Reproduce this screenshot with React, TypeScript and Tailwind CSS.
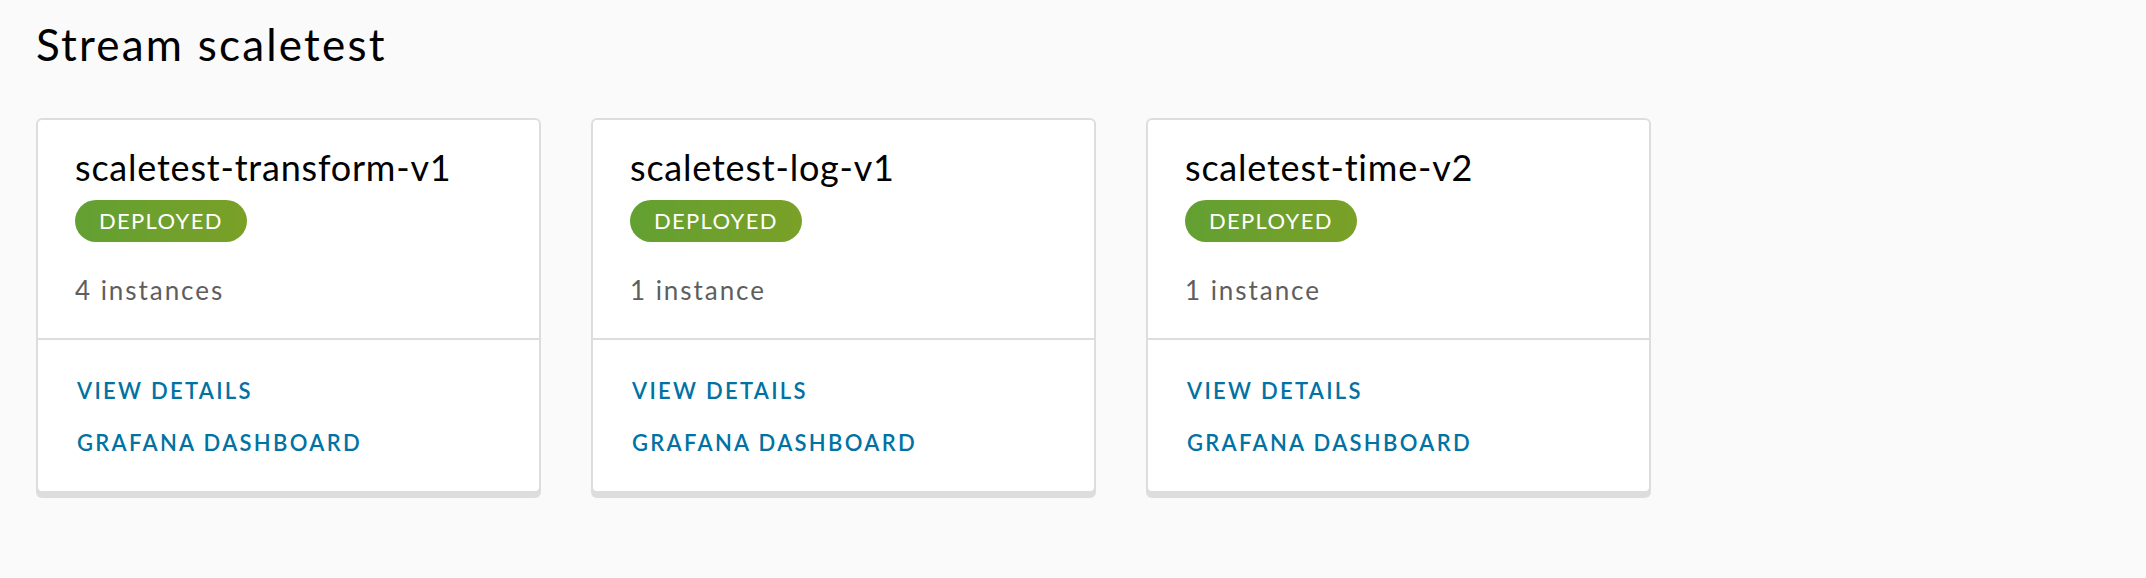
import React from "react";

const streams = [
  { name: "scaletest-transform-v1", instances: "4 instances" },
  { name: "scaletest-log-v1", instances: "1 instance" },
  { name: "scaletest-time-v2", instances: "1 instance" },
];

function Card({ name, instances }: { name: string; instances: string }) {
  return (
    <div className="w-[505px] rounded-[6px] border-2 border-[#dddddd] bg-white shadow-[0_5px_0_0_#dddddd] flex flex-col">
      <div className="px-[37px] pt-[25px] pb-[30px] flex flex-col">
        <div className="text-[36px] leading-[44px] tracking-[0.022em] text-black">{name}</div>
        <div className="mt-[11px] flex">
          <span className="h-[42px] px-[24px] rounded-full bg-gradient-to-r from-[#62a032] to-[#7aa027] text-white text-[22px] leading-[42px] tracking-[0.06em] flex items-center">
            DEPLOYED
          </span>
        </div>
        <div className="mt-[30px] text-[26px] leading-[36px] tracking-[0.075em] text-[#5e5e5e]">{instances}</div>
      </div>
      <div className="h-[2px] bg-[#dddddd]" />
      <div className="px-[39px] pt-[36px] pb-[33px] flex flex-col gap-[22px]">
        <a className="text-[22px] leading-[30px] font-semibold tracking-[0.105em] text-[#0072a3]">VIEW DETAILS</a>
        <a className="text-[22px] leading-[30px] font-semibold tracking-[0.105em] text-[#0072a3]">GRAFANA DASHBOARD</a>
      </div>
    </div>
  );
}

export default function App() {
  return (
    <div
      className="min-h-[578px] w-full bg-[#fafafa] pl-[36px] pt-[18px]"
      style={{ fontFamily: "Lato, 'Open Sans', sans-serif" }}
    >
      <h1 className="text-[44px] leading-[52px] tracking-[0.05em] text-black font-normal">Stream scaletest</h1>
      <div className="mt-[48px] flex items-start gap-[50px]">
        {streams.map((s) => (
          <Card key={s.name} {...s} />
        ))}
      </div>
    </div>
  );
}
